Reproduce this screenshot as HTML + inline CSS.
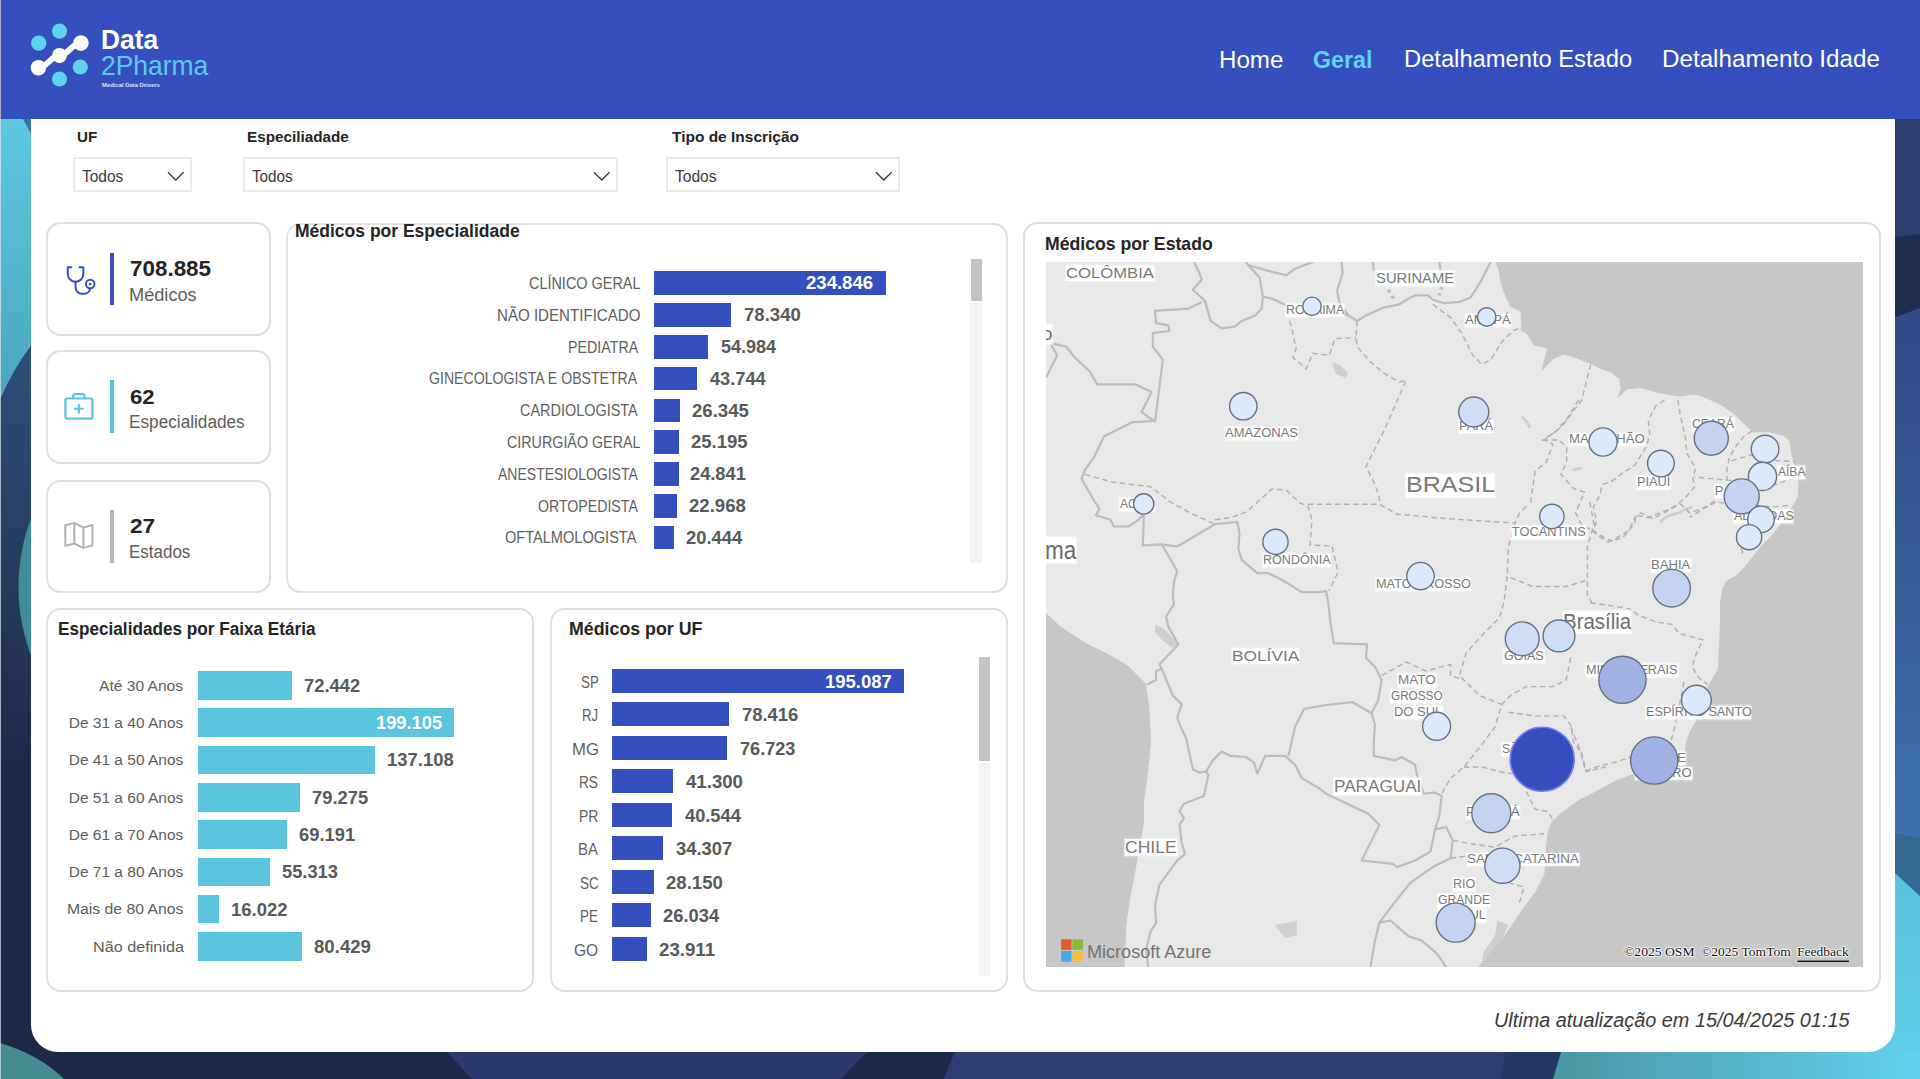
<!DOCTYPE html>
<html><head><meta charset="utf-8"><title>Data2Pharma</title>
<style>
html,body{margin:0;padding:0;width:1920px;height:1079px;overflow:hidden;background:#1e2848;font-family:"Liberation Sans",sans-serif;}
.a{position:absolute;}
.t{position:absolute;white-space:nowrap;line-height:1;transform-origin:0 0;}
.hbox{background:rgba(255,255,255,0.92);box-shadow:0 0 1.5px 1px rgba(255,255,255,0.75);}
.halo{text-shadow:0 0 1px #fff,0 0 2px #fff,1px 0 1px #fff,-1px 0 1px #fff,0 1px 1px #fff,0 -1px 1px #fff;}
</style></head><body>
<svg class="a" style="left:0;top:0" width="1920" height="1079" viewBox="0 0 1920 1079">
<defs>
<linearGradient id="gcy" x1="0" y1="0" x2="0" y2="1"><stop offset="0" stop-color="#5ec8df"/><stop offset="1" stop-color="#4aa6bc"/></linearGradient>
<linearGradient id="gdb" x1="0" y1="0" x2="0" y2="1"><stop offset="0" stop-color="#2c5079"/><stop offset="1" stop-color="#1f2a4c"/></linearGradient>
<linearGradient id="grb" x1="0" y1="0" x2="0" y2="1"><stop offset="0" stop-color="#2f4a85"/><stop offset="1" stop-color="#3d70ae"/></linearGradient>
<linearGradient id="gteal" x1="0" y1="0" x2="1" y2="0"><stop offset="0" stop-color="#4a96a4"/><stop offset="1" stop-color="#62d2ec"/></linearGradient>
<linearGradient id="grc" x1="0" y1="0" x2="0" y2="1"><stop offset="0" stop-color="#5ac2da"/><stop offset="1" stop-color="#60cfe9"/></linearGradient>
</defs>
<rect width="1920" height="1079" fill="#1e2848"/>
<rect x="1880" y="119" width="40" height="121" fill="#2d3d6e"/>
<polygon points="1880,239 1920,234 1920,308 1880,323" fill="#1f2d50"/>
<polygon points="1880,323 1920,308 1920,839 1880,831" fill="url(#grb)"/>
<polygon points="1880,831 1920,839 1920,896 1880,859" fill="#336a8f"/>
<polygon points="1880,859 1920,896 1920,1079 1860,1079" fill="url(#grc)"/>
<path d="M0,119 L31,119 L31,346 Q14,368 0,400 Z" fill="url(#gcy)"/>
<path d="M0,400 Q14,368 31,346 L31,760 L0,760 Z" fill="url(#gdb)"/>
<circle cx="212.5" cy="587" r="194" fill="#3f8d9a"/>
<path d="M0,1043 Q40,1055 64,1079 L0,1079 Z" fill="#488a94"/>
<polygon points="447,1052 867,1052 840.6,1079 472,1079" fill="#2c3b6d"/>
<polygon points="954.7,1052 1505.7,1052 1501.6,1079 943.75,1079" fill="#2d3d70"/>
<polygon points="1505.7,1052 1561,1052 1553,1079 1501.6,1079" fill="#223a62"/>
<polygon points="1561,1052 1920,1052 1920,1079 1553,1079" fill="url(#gteal)"/>
<polygon points="23,119 31,119 31,134" fill="#3d739b"/>
<rect x="0" y="0" width="1" height="1079" fill="#dfe6f3" opacity="0.7"/>
</svg>
<div class="a" style="left:31.00px;top:100.00px;width:1864.00px;height:952.00px;background:#fff;border-radius:0 0 27px 27px;"></div>
<div class="a" style="left:1.00px;top:0.00px;width:1919.00px;height:119.00px;background:#3550be;"></div>
<svg class="a" style="left:0;top:0" width="220" height="100" viewBox="0 0 220 100">
<path d="M38.4,67.7 C47,67.7 51,55.4 59.5,55.4 C68,55.4 72,43.1 80.9,43.1" stroke="#fff" stroke-width="6" fill="none" stroke-linecap="round"/>
<circle cx="59.5" cy="31.1" r="7.6" fill="#5fd3ee"/>
<circle cx="38.7" cy="43.1" r="7.7" fill="#5fd3ee"/>
<circle cx="80.3" cy="67" r="7.6" fill="#5fd3ee"/>
<circle cx="59.5" cy="79" r="7.6" fill="#5fd3ee"/>
<circle cx="80.9" cy="43.1" r="7.8" fill="#fff"/>
<circle cx="59.5" cy="55.4" r="7.5" fill="#fff"/>
<circle cx="38.4" cy="67.7" r="7.7" fill="#fff"/>
</svg>
<div class="a" style="left:72.70px;top:156.50px;width:119.80px;height:35.20px;box-sizing:border-box;border:2px solid #ebebeb;background:#fff;"></div>
<svg class="a" style="left:166.8px;top:171.0px" width="17.6" height="11"><path d="M1,1.2 L8.80,9.00 L16.60,1.2" stroke="#3b3a39" stroke-width="1.3" fill="none"/></svg>
<div class="a" style="left:242.60px;top:157.00px;width:375.90px;height:34.50px;box-sizing:border-box;border:2px solid #ebebeb;background:#fff;"></div>
<svg class="a" style="left:593.3px;top:171.0px" width="17.5" height="11"><path d="M1,1.2 L8.75,9.00 L16.50,1.2" stroke="#3b3a39" stroke-width="1.3" fill="none"/></svg>
<div class="a" style="left:666.25px;top:157.00px;width:233.55px;height:34.50px;box-sizing:border-box;border:2px solid #ebebeb;background:#fff;"></div>
<svg class="a" style="left:874.5px;top:171.0px" width="17.6" height="11"><path d="M1,1.2 L8.80,9.00 L16.60,1.2" stroke="#3b3a39" stroke-width="1.3" fill="none"/></svg>
<div class="a" style="left:45.65px;top:222.40px;width:225.45px;height:113.60px;box-sizing:border-box;border:2px solid #e0e0e0;border-radius:14.5px;background:#fff;"></div>
<div class="a" style="left:45.65px;top:350.40px;width:225.45px;height:113.20px;box-sizing:border-box;border:2px solid #e0e0e0;border-radius:14.5px;background:#fff;"></div>
<div class="a" style="left:45.65px;top:479.80px;width:225.45px;height:113.40px;box-sizing:border-box;border:2px solid #e0e0e0;border-radius:14.5px;background:#fff;"></div>
<div class="a" style="left:110.30px;top:252.50px;width:3.90px;height:52.30px;background:#3550be;"></div>
<div class="a" style="left:110.30px;top:380.40px;width:3.90px;height:52.50px;background:#5bc5dd;"></div>
<div class="a" style="left:110.30px;top:510.00px;width:3.90px;height:52.90px;background:#bab6b2;"></div>
<svg class="a" style="left:60px;top:258px" width="42" height="42" viewBox="60 258 42 42">
<path d="M71.4,267.2 H67.75 V274 A7.8,7.8 0 0 0 83.35,274 V267.2 H79.6" fill="none" stroke="#3550be" stroke-width="2" stroke-linecap="round" stroke-linejoin="round"/>
<path d="M75.55,281.8 V287.6 A6.2,6.2 0 0 0 81.75,293.8 H84 A6.2,6.2 0 0 0 90.2,288.4" fill="none" stroke="#3550be" stroke-width="2"/>
<circle cx="90.2" cy="284.1" r="4.3" fill="none" stroke="#3550be" stroke-width="2"/>
<circle cx="90.2" cy="284.1" r="1.3" fill="#3550be"/>
</svg>
<svg class="a" style="left:60px;top:388px" width="40" height="40" viewBox="60 388 40 40">
<rect x="65.4" y="398.5" width="27" height="20.2" rx="2" fill="none" stroke="#5bc5dd" stroke-width="2.2"/>
<path d="M73.2,398.5 V396 A2,2 0 0 1 75.2,394 H82.6 A2,2 0 0 1 84.6,396 V398.5" fill="none" stroke="#5bc5dd" stroke-width="2.2"/>
<path d="M78.9,404.7 V412.7 M74.9,408.7 H82.9" stroke="#5bc5dd" stroke-width="2" stroke-linecap="round"/>
</svg>
<svg class="a" style="left:60px;top:516px" width="40" height="38" viewBox="60 516 40 38">
<path d="M65.3,525.3 L74.3,522.9 L83.4,527.6 L92.4,525 L92.4,545.6 L83.4,547.9 L74.3,543.6 L65.3,545.8 Z" fill="none" stroke="#b3b0ad" stroke-width="2" stroke-linejoin="round"/>
<path d="M74.3,522.9 V543.6 M83.4,527.6 V547.9" stroke="#b3b0ad" stroke-width="2"/>
</svg>
<div class="a" style="left:286.40px;top:222.90px;width:721.90px;height:369.70px;box-sizing:border-box;border:2px solid #e0e0e0;border-radius:14.5px;background:#fff;"></div>
<div class="a" style="left:46.10px;top:607.60px;width:488.20px;height:384.00px;box-sizing:border-box;border:2px solid #e0e0e0;border-radius:14.5px;background:#fff;"></div>
<div class="a" style="left:549.80px;top:607.60px;width:457.80px;height:384.00px;box-sizing:border-box;border:2px solid #e0e0e0;border-radius:14.5px;background:#fff;"></div>
<div class="a" style="left:1023.00px;top:222.40px;width:857.60px;height:769.20px;box-sizing:border-box;border:2px solid #e0e0e0;border-radius:14.5px;background:#fff;"></div>
<div class="a" style="left:654.00px;top:271.25px;width:231.75px;height:23.70px;background:#3550be;"></div>
<div class="a" style="left:654.00px;top:303.07px;width:77.31px;height:23.70px;background:#3550be;"></div>
<div class="a" style="left:654.00px;top:334.89px;width:54.26px;height:23.70px;background:#3550be;"></div>
<div class="a" style="left:654.00px;top:366.71px;width:43.17px;height:23.70px;background:#3550be;"></div>
<div class="a" style="left:654.00px;top:398.53px;width:26.00px;height:23.70px;background:#3550be;"></div>
<div class="a" style="left:654.00px;top:430.35px;width:24.86px;height:23.70px;background:#3550be;"></div>
<div class="a" style="left:654.00px;top:462.17px;width:24.51px;height:23.70px;background:#3550be;"></div>
<div class="a" style="left:654.00px;top:493.99px;width:22.66px;height:23.70px;background:#3550be;"></div>
<div class="a" style="left:654.00px;top:525.81px;width:20.17px;height:23.70px;background:#3550be;"></div>
<div class="a" style="left:970.20px;top:302.60px;width:12.00px;height:260.00px;background:#f4f4f4;"></div>
<div class="a" style="left:970.70px;top:258.50px;width:11.50px;height:42.10px;background:#c4c4c4;"></div>
<div class="a" style="left:198.40px;top:671.10px;width:93.15px;height:28.60px;background:#5bc5dd;"></div>
<div class="a" style="left:198.40px;top:708.39px;width:256.01px;height:28.60px;background:#5bc5dd;"></div>
<div class="a" style="left:198.40px;top:745.68px;width:176.29px;height:28.60px;background:#5bc5dd;"></div>
<div class="a" style="left:198.40px;top:782.97px;width:101.93px;height:28.60px;background:#5bc5dd;"></div>
<div class="a" style="left:198.40px;top:820.26px;width:88.97px;height:28.60px;background:#5bc5dd;"></div>
<div class="a" style="left:198.40px;top:857.55px;width:71.12px;height:28.60px;background:#5bc5dd;"></div>
<div class="a" style="left:198.40px;top:894.84px;width:20.60px;height:28.60px;background:#5bc5dd;"></div>
<div class="a" style="left:198.40px;top:932.13px;width:103.42px;height:28.60px;background:#5bc5dd;"></div>
<div class="a" style="left:611.50px;top:669.00px;width:292.49px;height:23.60px;background:#3550be;"></div>
<div class="a" style="left:611.50px;top:702.49px;width:117.57px;height:23.60px;background:#3550be;"></div>
<div class="a" style="left:611.50px;top:735.98px;width:115.03px;height:23.60px;background:#3550be;"></div>
<div class="a" style="left:611.50px;top:769.47px;width:61.92px;height:23.60px;background:#3550be;"></div>
<div class="a" style="left:611.50px;top:802.96px;width:60.79px;height:23.60px;background:#3550be;"></div>
<div class="a" style="left:611.50px;top:836.45px;width:51.44px;height:23.60px;background:#3550be;"></div>
<div class="a" style="left:611.50px;top:869.94px;width:42.21px;height:23.60px;background:#3550be;"></div>
<div class="a" style="left:611.50px;top:903.43px;width:39.03px;height:23.60px;background:#3550be;"></div>
<div class="a" style="left:611.50px;top:936.92px;width:35.85px;height:23.60px;background:#3550be;"></div>
<div class="a" style="left:978.50px;top:763.00px;width:11.50px;height:213.20px;background:#f4f4f4;"></div>
<div class="a" style="left:978.50px;top:656.70px;width:11.50px;height:104.30px;background:#c4c4c4;"></div>
<svg class="a" style="left:0;top:0" width="1920" height="1079" viewBox="0 0 1920 1079">
<defs><clipPath id="mclip"><rect x="1046" y="262" width="817" height="705"/></clipPath></defs>
<g clip-path="url(#mclip)">
<rect x="1046" y="262" width="817" height="705" fill="#c7c7c7"/>
<polygon points="1041,257 1495.3,262.0 1499.1,271.8 1499.9,279.5 1502.9,290.2 1506.8,299.3 1510.6,307.0 1520.5,311.6 1521.3,323.8 1520.5,330.0 1527.4,334.5 1533.5,345.2 1547.3,348.3 1541.2,371.2 1553.4,359.0 1564.1,354.4 1571.7,356.7 1590.1,363.6 1602.3,369.7 1611.5,372.7 1619.1,378.9 1620.7,388.0 1617.6,398.0 1626.8,389.6 1640.6,388.0 1660.4,393.4 1680.0,396.7 1693.4,394.5 1702.3,396.7 1720.0,404.5 1733.4,413.4 1744.5,424.5 1753.4,432.3 1769.0,432.3 1782.4,435.6 1789.0,440.0 1791.3,453.4 1794.6,466.8 1798.0,480.2 1798.0,495.7 1793.5,504.6 1784.6,518.0 1773.5,533.6 1762.3,544.7 1753.4,555.8 1744.5,567.0 1735.6,575.9 1726.7,580.3 1722.3,589.2 1720.0,602.6 1720.0,620.0 1719.5,634.8 1717.7,669.5 1707.3,687.0 1703.1,706.6 1696.4,720.0 1690.0,731.0 1686.5,740.0 1684.5,754.0 1670.0,768.0 1650.0,773.0 1631.2,774.8 1615.7,780.4 1595.6,791.5 1577.8,800.4 1560.0,813.7 1551.2,822.6 1547.8,831.5 1545.6,851.6 1544.5,873.8 1535.6,891.6 1522.2,909.4 1513.3,922.7 1505.0,935.0 1492.0,950.0 1478.0,967.0 1124.6,967.0 1126.3,924.8 1129.9,900.1 1135.2,871.9 1140.4,843.7 1144.0,822.6 1144.0,801.5 1147.5,776.8 1151.0,741.5 1149.3,706.3 1145.7,683.4 1128.1,665.8 1110.5,655.2 1085.8,642.9 1061.1,627.0 1046.0,612.9 1041,257" fill="#e8e8e8"/>
<polyline points="1660.0,522.0 1668.0,516.0 1678.0,513.0 1686.0,509.0 1692.0,507.0" fill="none" stroke="#cdcdcd" stroke-width="2.5"/>
<polyline points="1522.0,417.0 1527.0,422.0 1530.0,428.0" fill="none" stroke="#cdcdcd" stroke-width="2.5"/>
<polyline points="1573.0,470.0 1582.0,468.0" fill="none" stroke="#cdcdcd" stroke-width="2.5"/>
<polygon points="1155.0,625.0 1163.0,628.0 1170.0,635.0 1178.0,644.0 1172.0,648.0 1162.0,640.0 1155.0,632.0" fill="#cfcfcf"/>
<polygon points="1497.3,920.5 1508.4,925.0 1501.7,940.5 1490.6,951.6 1481.7,962.8 1483.9,951.6 1495.0,936.1" fill="#cfcfcf"/>
<polygon points="1332.0,362.0 1340.0,365.0 1348.0,373.0 1346.0,378.0 1336.0,374.0" fill="#cfcfcf"/>
<polygon points="1275.0,925.0 1297.0,921.0 1297.0,935.0 1285.0,938.0" fill="#cfcfcf"/>
<polyline points="1084.9,474.4 1112.7,482.2 1150.5,486.6 1170.6,502.0 1190.6,513.1 1215.0,524.2" fill="none" stroke="#b0b0b0" stroke-width="1.4" stroke-dasharray="5.5 3.5"/>
<polyline points="1215.0,519.8 1230.6,517.6 1246.2,512.0 1260.0,500.0 1272.0,489.0 1286.0,490.0 1300.0,503.0 1308.0,506.0 1312.0,520.0 1310.0,545.0 1332.0,546.0 1338.0,572.0 1329.0,591.0" fill="none" stroke="#b0b0b0" stroke-width="1.4" stroke-dasharray="5.5 3.5"/>
<polyline points="1308.0,504.2 1366.0,504.2 1379.4,504.2 1397.2,514.2 1448.3,518.7 1515.0,523.1 1519.5,513.1 1528.4,504.2" fill="none" stroke="#b0b0b0" stroke-width="1.4" stroke-dasharray="5.5 3.5"/>
<polyline points="1289.5,320.9 1291.8,328.7 1296.2,348.7 1292.9,357.6 1306.2,368.8 1312.9,353.2 1329.3,355.4 1334.9,338.7 1356.0,337.6" fill="none" stroke="#b0b0b0" stroke-width="1.4" stroke-dasharray="5.5 3.5"/>
<polyline points="1357.1,320.9 1356.0,337.6 1357.1,346.5 1370.5,362.1 1383.8,373.2 1399.4,382.1 1406.1,379.9 1399.4,395.5 1383.8,431.0 1366.0,466.6 1374.9,484.4 1379.4,497.8 1379.4,504.2" fill="none" stroke="#b0b0b0" stroke-width="1.4" stroke-dasharray="5.5 3.5"/>
<polyline points="1432.8,304.3 1450.6,317.6 1461.7,333.2 1472.8,355.4 1481.7,364.3 1490.6,359.9 1501.7,342.1 1512.8,331.0 1520.6,327.6" fill="none" stroke="#b0b0b0" stroke-width="1.4" stroke-dasharray="5.5 3.5"/>
<polyline points="1590.7,364.3 1581.8,399.9 1561.8,426.6 1544.0,439.9 1552.9,444.4 1546.2,462.2 1535.1,471.1 1530.6,502.0 1528.4,504.2" fill="none" stroke="#b0b0b0" stroke-width="1.4" stroke-dasharray="5.5 3.5"/>
<polyline points="1515.0,523.1 1508.4,546.5 1507.3,575.4 1503.9,602.1 1499.5,617.7 1481.7,635.5 1466.1,653.2 1459.5,675.5 1463.9,679.9 1479.5,695.5 1501.7,704.4 1495.0,727.0 1481.7,744.8 1463.9,767.0 1450.6,778.2 1441.7,793.7" fill="none" stroke="#b0b0b0" stroke-width="1.4" stroke-dasharray="5.5 3.5"/>
<polyline points="1578.6,400.0 1566.7,419.3 1556.3,431.1 1543.0,440.0 1559.3,440.0 1566.7,447.5 1566.7,462.3 1560.8,474.2 1574.1,489.0 1584.5,492.0 1575.6,512.7 1581.5,524.6 1592.0,530.0" fill="none" stroke="#b0b0b0" stroke-width="1.4" stroke-dasharray="5.5 3.5"/>
<polyline points="1589.7,502.0 1594.1,524.2 1587.4,546.5 1587.4,568.7 1587.4,595.4 1594.1,606.5" fill="none" stroke="#b0b0b0" stroke-width="1.4" stroke-dasharray="5.5 3.5"/>
<polyline points="1510.6,577.6 1532.8,586.5 1548.4,586.5 1566.2,586.5 1588.5,579.8" fill="none" stroke="#b0b0b0" stroke-width="1.4" stroke-dasharray="5.5 3.5"/>
<polyline points="1381.6,675.5 1406.1,662.1 1426.1,671.0 1450.6,664.4 1450.6,675.5 1463.9,679.9" fill="none" stroke="#b0b0b0" stroke-width="1.4" stroke-dasharray="5.5 3.5"/>
<polyline points="1570.7,657.7 1566.2,679.9 1552.9,686.6 1526.2,686.6 1510.6,695.5 1501.7,704.4" fill="none" stroke="#b0b0b0" stroke-width="1.4" stroke-dasharray="5.5 3.5"/>
<polyline points="1508.4,712.2 1534.9,715.9 1563.9,715.9 1571.1,725.5 1573.5,742.4 1580.7,752.0 1585.5,771.3 1597.6,766.5 1616.9,761.7 1631.3,756.9 1650.0,752.0" fill="none" stroke="#b0b0b0" stroke-width="1.4" stroke-dasharray="5.5 3.5"/>
<polyline points="1590.4,602.7 1616.4,606.5 1629.7,608.8 1638.6,615.4 1656.4,622.1 1672.0,624.3 1678.6,633.2 1703.1,639.9 1696.4,653.2 1692.0,666.6 1698.7,677.7 1707.6,684.4" fill="none" stroke="#b0b0b0" stroke-width="1.4" stroke-dasharray="5.5 3.5"/>
<polyline points="1684.0,682.0 1676.4,720.0 1670.0,745.0 1660.0,757.0" fill="none" stroke="#b0b0b0" stroke-width="1.4" stroke-dasharray="5.5 3.5"/>
<polyline points="1591.9,530.9 1607.5,542.0 1623.0,537.6 1634.2,524.2 1636.4,515.3 1647.5,517.6 1665.3,510.9 1680.9,504.2 1689.8,513.1 1707.6,506.4 1716.4,502.0 1728.3,503.8" fill="none" stroke="#b0b0b0" stroke-width="1.4" stroke-dasharray="5.5 3.5"/>
<polyline points="1664.6,400.0 1655.7,405.9 1648.3,420.8 1649.7,434.1 1646.8,446.0 1634.9,465.3 1623.0,472.7 1611.2,481.6 1602.3,484.5 1599.3,496.4 1593.4,506.8 1596.4,521.6 1593.4,530.5" fill="none" stroke="#b0b0b0" stroke-width="1.4" stroke-dasharray="5.5 3.5"/>
<polyline points="1677.9,400.0 1680.2,414.8 1685.3,437.1 1686.8,453.4 1695.7,468.2 1692.8,477.1 1694.2,487.5 1685.3,497.9 1677.9,503.8 1664.6,512.7 1652.7,518.6 1640.8,512.7 1634.9,517.2 1629.0,530.5 1611.2,540.9 1602.3,536.4 1593.4,530.5" fill="none" stroke="#b0b0b0" stroke-width="1.4" stroke-dasharray="5.5 3.5"/>
<polyline points="1752.1,431.1 1744.7,435.6 1737.2,444.5 1729.8,456.4 1726.9,468.2 1726.9,480.1 1694.2,477.1" fill="none" stroke="#b0b0b0" stroke-width="1.4" stroke-dasharray="5.5 3.5"/>
<polyline points="1731.3,460.8 1750.6,454.9 1777.3,460.8 1795.1,461.5" fill="none" stroke="#b0b0b0" stroke-width="1.4" stroke-dasharray="5.5 3.5"/>
<polyline points="1726.9,480.1 1775.8,484.5 1792.1,478.6" fill="none" stroke="#b0b0b0" stroke-width="1.4" stroke-dasharray="5.5 3.5"/>
<polyline points="1715.0,500.8 1697.2,512.7 1689.8,517.2" fill="none" stroke="#b0b0b0" stroke-width="1.4" stroke-dasharray="5.5 3.5"/>
<polyline points="1728.3,503.8 1774.3,506.8 1790.6,505.3" fill="none" stroke="#b0b0b0" stroke-width="1.4" stroke-dasharray="5.5 3.5"/>
<polyline points="1738.7,539.8 1743.1,555.4" fill="none" stroke="#b0b0b0" stroke-width="1.4" stroke-dasharray="5.5 3.5"/>
<polyline points="1463.9,767.0 1481.7,767.0 1503.9,772.6 1512.8,773.7" fill="none" stroke="#b0b0b0" stroke-width="1.4" stroke-dasharray="5.5 3.5"/>
<polyline points="1526.2,791.5 1535.1,809.3 1548.4,811.5 1552.9,820.4" fill="none" stroke="#b0b0b0" stroke-width="1.4" stroke-dasharray="5.5 3.5"/>
<polyline points="1452.8,840.4 1470.6,843.8 1495.0,847.1 1515.1,836.0 1544.0,833.8" fill="none" stroke="#b0b0b0" stroke-width="1.4" stroke-dasharray="5.5 3.5"/>
<polyline points="1508.4,882.7 1524.0,887.1 1519.5,902.7" fill="none" stroke="#b0b0b0" stroke-width="1.4" stroke-dasharray="5.5 3.5"/>
<polyline points="1570.7,727.0 1581.8,753.7 1586.2,771.5 1606.0,767.0" fill="none" stroke="#b0b0b0" stroke-width="1.4" stroke-dasharray="5.5 3.5"/>
<polyline points="1450.6,858.2 1467.0,856.0" fill="none" stroke="#b0b0b0" stroke-width="1.4" stroke-dasharray="5.5 3.5"/>
<polyline points="1193.9,262.0 1199.5,273.1 1201.7,279.8 1192.8,289.8 1205.0,300.9 1210.6,320.9 1221.7,328.3 1235.1,326.5 1241.7,320.9 1255.1,315.4 1261.7,308.7 1262.9,296.5 1259.5,277.6 1248.4,265.3 1246.2,262.0" fill="none" stroke="#bdbdbd" stroke-width="2.2" stroke-linejoin="round"/>
<polyline points="1262.9,296.5 1275.1,299.8 1286.2,305.4 1348.2,315.4 1357.1,320.9 1366.0,315.4 1383.8,307.6 1399.4,304.3 1408.3,298.7 1415.0,295.4 1428.3,295.4 1432.8,299.8 1443.9,303.1 1459.5,302.0 1470.6,297.6 1481.7,279.8 1490.6,262.0" fill="none" stroke="#bdbdbd" stroke-width="2.2" stroke-linejoin="round"/>
<polyline points="1248.4,265.3 1268.4,270.9 1286.2,275.3 1295.1,268.7 1312.9,262.0" fill="none" stroke="#bdbdbd" stroke-width="2.2" stroke-linejoin="round"/>
<polyline points="1341.6,262.0 1342.7,273.1 1337.1,290.9 1339.3,302.0 1348.2,315.4" fill="none" stroke="#bdbdbd" stroke-width="2.2" stroke-linejoin="round"/>
<polyline points="1372.7,262.0 1373.8,270.9" fill="none" stroke="#bdbdbd" stroke-width="2.2" stroke-linejoin="round"/>
<polyline points="1439.4,262.0 1440.5,270.9" fill="none" stroke="#bdbdbd" stroke-width="2.2" stroke-linejoin="round"/>
<polyline points="1201.7,302.0 1188.3,308.7 1155.0,310.9 1156.1,323.2 1168.3,325.4 1169.4,331.0 1152.8,333.2 1152.8,346.5 1162.8,359.9 1155.0,422.1" fill="none" stroke="#bdbdbd" stroke-width="2.2" stroke-linejoin="round"/>
<polyline points="1050.4,343.2 1066.0,346.5 1074.9,357.6 1089.4,371.0 1097.2,384.3 1119.4,384.3 1135.0,384.3 1151.6,392.1 1141.6,412.1 1153.9,421.0 1132.7,422.1 1103.8,436.6 1093.8,457.7 1084.9,470.0 1081.6,478.9 1094.9,502.0 1099.4,508.7 1096.0,515.3 1110.5,519.8 1113.8,526.5 1128.3,526.5 1137.2,520.9 1143.9,514.2 1142.8,545.4 1161.7,544.3 1177.2,546.5 1190.6,538.7 1201.7,532.0 1215.0,524.2 1237.3,522.0 1239.5,533.1 1238.4,548.7 1241.7,559.8 1257.3,573.2 1268.4,573.2 1281.8,579.8 1301.8,592.1 1319.6,592.1 1326.0,591.0 1328.2,602.1 1330.4,622.1 1333.8,643.2 1367.1,644.4 1366.0,657.7 1374.9,666.6 1381.6,679.9 1378.3,700.0 1371.6,713.3 1374.9,724.4 1373.8,742.0 1373.8,755.9 1395.0,760.4 1401.6,757.0 1415.0,764.8 1417.2,775.9 1423.9,793.7 1435.0,792.6 1441.7,796.0 1439.4,816.0 1435.0,829.3 1446.1,827.1 1452.8,840.4 1450.6,858.2 1432.8,867.1 1410.5,882.7 1392.7,904.9 1379.4,922.7 1390.5,920.5 1408.3,936.1 1421.6,940.5 1437.2,953.9 1446.1,967.0" fill="none" stroke="#bdbdbd" stroke-width="2.2" stroke-linejoin="round"/>
<polyline points="1050.4,343.2 1057.1,355.4 1046.0,377.7" fill="none" stroke="#bdbdbd" stroke-width="2.2" stroke-linejoin="round"/>
<polyline points="1379.4,922.7 1374.9,940.5 1370.5,967.0" fill="none" stroke="#bdbdbd" stroke-width="2.2" stroke-linejoin="round"/>
<polyline points="1161.7,544.3 1177.2,571.0 1173.9,582.1 1172.8,595.4 1173.9,604.3 1166.1,616.5 1168.3,626.6 1178.3,644.4 1159.4,664.4 1161.7,668.8 1156.1,671.0 1156.1,679.9 1147.2,684.4" fill="none" stroke="#bdbdbd" stroke-width="2.2" stroke-linejoin="round"/>
<polyline points="1161.7,668.8 1172.8,695.5 1181.7,704.4 1177.2,717.7 1180.6,726.6 1186.1,738.1 1192.8,769.3 1199.5,772.6 1206.1,771.5 1208.4,774.8 1203.9,796.0 1183.9,803.7 1179.5,811.5 1183.9,818.2 1179.5,824.9 1181.7,842.7 1185.0,853.8 1177.2,860.5 1170.6,869.3 1159.4,884.9 1155.0,904.9 1156.1,922.7 1150.5,931.6 1146.1,949.4 1148.3,967.0" fill="none" stroke="#bdbdbd" stroke-width="2.2" stroke-linejoin="round"/>
<polyline points="1206.1,771.5 1212.8,760.4 1221.7,751.5 1230.6,755.9 1246.2,757.0 1254.0,762.6 1257.3,773.7 1265.1,755.9 1285.1,755.9 1295.1,764.8 1301.8,778.2 1317.4,787.1 1326.0,793.7 1368.3,813.7 1379.4,824.9 1361.6,860.5 1392.7,863.8 1397.2,867.1 1415.0,860.5 1430.5,851.6 1435.0,829.3" fill="none" stroke="#bdbdbd" stroke-width="2.2" stroke-linejoin="round"/>
<polyline points="1371.6,713.3 1352.7,702.2 1326.0,705.0 1304.0,708.9 1295.1,726.6 1288.4,756.0" fill="none" stroke="#bdbdbd" stroke-width="2.2" stroke-linejoin="round"/>
<polyline points="1388.3,289.8 1395.0,300.9" fill="none" stroke="#bdbdbd" stroke-width="3.5" stroke-dasharray="3 4"/>
<polyline points="1441.7,286.5 1439.4,295.4" fill="none" stroke="#bdbdbd" stroke-width="3.5" stroke-dasharray="3 4"/>
</g>
<span class="t " style="left:101.15px;top:27.00px;font-size:26.96px;color:#ffffff;font-weight:bold;transform:scaleX(0.9787);">Data</span>
<span class="t " style="left:101.06px;top:52.00px;font-size:27.37px;color:#5dc9ee;transform:scaleX(0.9658);">2Pharma</span>
<span class="t " style="left:102.43px;top:83.00px;font-size:5.87px;color:#dfe4f5;font-weight:bold;transform:scaleX(1.0034);">Medical Data Drivers</span>
<span class="t " style="left:1218.51px;top:48.00px;font-size:24.02px;color:#ffffff;transform:scaleX(1.0044);">Home</span>
<span class="t " style="left:1313.47px;top:48.00px;font-size:24.30px;color:#5fd3f3;font-weight:bold;transform:scaleX(0.9558);">Geral</span>
<span class="t " style="left:1403.75px;top:47.00px;font-size:24.02px;color:#ffffff;transform:scaleX(0.9878);">Detalhamento Estado</span>
<span class="t " style="left:1661.61px;top:47.00px;font-size:24.02px;color:#ffffff;transform:scaleX(1.0075);">Detalhamento Idade</span>
<span class="t " style="left:76.99px;top:129.00px;font-size:15.36px;color:#252423;font-weight:bold;transform:scaleX(0.9867);">UF</span>
<span class="t " style="left:246.85px;top:129.00px;font-size:15.36px;color:#252423;font-weight:bold;transform:scaleX(0.9938);">Especiliadade</span>
<span class="t " style="left:671.50px;top:129.00px;font-size:15.36px;color:#252423;font-weight:bold;transform:scaleX(1.0074);">Tipo de Inscrição</span>
<span class="t " style="left:81.66px;top:169.00px;font-size:15.92px;color:#3b3a39;transform:scaleX(0.9727);">Todos</span>
<span class="t " style="left:251.76px;top:169.00px;font-size:15.92px;color:#3b3a39;transform:scaleX(0.9583);">Todos</span>
<span class="t " style="left:675.16px;top:169.00px;font-size:15.92px;color:#3b3a39;transform:scaleX(0.9787);">Todos</span>
<span class="t " style="left:129.80px;top:259.00px;font-size:21.37px;color:#252423;font-weight:bold;transform:scaleX(1.0494);">708.885</span>
<span class="t " style="left:129.08px;top:287.00px;font-size:17.81px;color:#605e5c;transform:scaleX(1.0216);">Médicos</span>
<span class="t " style="left:129.81px;top:386.00px;font-size:21.09px;color:#252423;font-weight:bold;transform:scaleX(1.0506);">62</span>
<span class="t " style="left:129.16px;top:414.00px;font-size:17.81px;color:#605e5c;transform:scaleX(0.9666);">Especialidades</span>
<span class="t " style="left:129.79px;top:515.00px;font-size:21.09px;color:#252423;font-weight:bold;transform:scaleX(1.0755);">27</span>
<span class="t " style="left:129.17px;top:544.00px;font-size:17.81px;color:#605e5c;transform:scaleX(0.9536);">Estados</span>
<span class="t " style="left:295.11px;top:223.00px;font-size:17.60px;color:#252423;font-weight:bold;transform:scaleX(0.9948);">Médicos por Especialidade</span>
<span class="t " style="left:57.73px;top:621.00px;font-size:17.60px;color:#252423;font-weight:bold;transform:scaleX(0.9753);">Especialidades por Faixa Etária</span>
<span class="t " style="left:568.89px;top:621.00px;font-size:17.60px;color:#252423;font-weight:bold;transform:scaleX(1.0106);">Médicos por UF</span>
<span class="t " style="left:1045.00px;top:236.00px;font-size:17.88px;color:#252423;font-weight:bold;transform:scaleX(0.9884);">Médicos por Estado</span>
<span class="t " style="left:528.82px;top:275.00px;font-size:16.34px;color:#605e5c;transform:scaleX(0.8837);">CLÍNICO GERAL</span>
<span class="t " style="left:806.42px;top:274.00px;font-size:18.02px;color:#ffffff;font-weight:bold;transform:scaleX(1.0294);">234.846</span>
<span class="t " style="left:497.07px;top:307.00px;font-size:16.34px;color:#605e5c;transform:scaleX(0.9249);">NÃO IDENTIFICADO</span>
<span class="t " style="left:743.92px;top:306.00px;font-size:18.02px;color:#595959;font-weight:bold;transform:scaleX(1.0314);">78.340</span>
<span class="t " style="left:568.39px;top:339.00px;font-size:16.34px;color:#605e5c;transform:scaleX(0.8732);">PEDIATRA</span>
<span class="t " style="left:720.97px;top:338.00px;font-size:18.02px;color:#595959;font-weight:bold;">54.984</span>
<span class="t " style="left:428.84px;top:370.00px;font-size:16.34px;color:#605e5c;transform:scaleX(0.8636);">GINECOLOGISTA E OBSTETRA</span>
<span class="t " style="left:710.00px;top:370.00px;font-size:18.02px;color:#595959;font-weight:bold;transform:scaleX(1.0096);">43.744</span>
<span class="t " style="left:520.12px;top:402.00px;font-size:16.34px;color:#605e5c;transform:scaleX(0.8847);">CARDIOLOGISTA</span>
<span class="t " style="left:691.92px;top:402.00px;font-size:18.02px;color:#595959;font-weight:bold;transform:scaleX(1.0315);">26.345</span>
<span class="t " style="left:506.83px;top:434.00px;font-size:16.34px;color:#605e5c;transform:scaleX(0.8754);">CIRURGIÃO GERAL</span>
<span class="t " style="left:690.62px;top:433.00px;font-size:18.02px;color:#595959;font-weight:bold;transform:scaleX(1.0260);">25.195</span>
<span class="t " style="left:498.00px;top:466.00px;font-size:16.34px;color:#605e5c;transform:scaleX(0.8577);">ANESTESIOLOGISTA</span>
<span class="t " style="left:690.43px;top:465.00px;font-size:18.02px;color:#595959;font-weight:bold;transform:scaleX(1.0130);">24.841</span>
<span class="t " style="left:538.04px;top:498.00px;font-size:16.34px;color:#605e5c;transform:scaleX(0.8662);">ORTOPEDISTA</span>
<span class="t " style="left:688.62px;top:497.00px;font-size:18.02px;color:#595959;font-weight:bold;transform:scaleX(1.0315);">22.968</span>
<span class="t " style="left:505.12px;top:529.00px;font-size:16.34px;color:#605e5c;transform:scaleX(0.8923);">OFTALMOLOGISTA</span>
<span class="t " style="left:686.13px;top:529.00px;font-size:18.02px;color:#595959;font-weight:bold;transform:scaleX(1.0209);">20.444</span>
<span class="t " style="left:99.40px;top:678.00px;font-size:15.50px;color:#605e5c;transform:scaleX(1.0056);">Até 30 Anos</span>
<span class="t " style="left:303.93px;top:677.00px;font-size:18.02px;color:#595959;font-weight:bold;transform:scaleX(1.0186);">72.442</span>
<span class="t " style="left:68.69px;top:715.00px;font-size:15.50px;color:#605e5c;">De 31 a 40 Anos</span>
<span class="t " style="left:375.56px;top:714.00px;font-size:18.02px;color:#ffffff;font-weight:bold;transform:scaleX(1.0149);">199.105</span>
<span class="t " style="left:68.69px;top:752.00px;font-size:15.50px;color:#605e5c;">De 41 a 50 Anos</span>
<span class="t " style="left:386.65px;top:751.00px;font-size:18.02px;color:#595959;font-weight:bold;transform:scaleX(1.0244);">137.108</span>
<span class="t " style="left:68.69px;top:790.00px;font-size:15.50px;color:#605e5c;">De 51 a 60 Anos</span>
<span class="t " style="left:312.43px;top:789.00px;font-size:18.02px;color:#595959;font-weight:bold;transform:scaleX(1.0186);">79.275</span>
<span class="t " style="left:68.69px;top:827.00px;font-size:15.50px;color:#605e5c;">De 61 a 70 Anos</span>
<span class="t " style="left:299.03px;top:826.00px;font-size:18.02px;color:#595959;font-weight:bold;transform:scaleX(1.0186);">69.191</span>
<span class="t " style="left:68.69px;top:864.00px;font-size:15.50px;color:#605e5c;">De 71 a 80 Anos</span>
<span class="t " style="left:281.71px;top:863.00px;font-size:18.02px;color:#595959;font-weight:bold;transform:scaleX(1.0152);">55.313</span>
<span class="t " style="left:67.17px;top:901.00px;font-size:15.50px;color:#605e5c;transform:scaleX(1.0147);">Mais de 80 Anos</span>
<span class="t " style="left:230.75px;top:901.00px;font-size:18.02px;color:#595959;font-weight:bold;transform:scaleX(1.0256);">16.022</span>
<span class="t " style="left:92.73px;top:939.00px;font-size:15.50px;color:#605e5c;transform:scaleX(1.0455);">Não definida</span>
<span class="t " style="left:313.52px;top:938.00px;font-size:18.02px;color:#595959;font-weight:bold;transform:scaleX(1.0334);">80.429</span>
<span class="t " style="left:580.58px;top:675.00px;font-size:15.78px;color:#605e5c;transform:scaleX(0.8443);">SP</span>
<span class="t " style="left:825.44px;top:674.00px;font-size:17.60px;color:#ffffff;font-weight:bold;transform:scaleX(1.0518);">195.087</span>
<span class="t " style="left:582.47px;top:708.00px;font-size:15.78px;color:#605e5c;transform:scaleX(0.8378);">RJ</span>
<span class="t " style="left:741.62px;top:707.00px;font-size:17.60px;color:#595959;font-weight:bold;transform:scaleX(1.0466);">78.416</span>
<span class="t " style="left:572.09px;top:742.00px;font-size:15.78px;color:#605e5c;transform:scaleX(1.0604);">MG</span>
<span class="t " style="left:739.73px;top:741.00px;font-size:17.60px;color:#595959;font-weight:bold;transform:scaleX(1.0296);">76.723</span>
<span class="t " style="left:579.43px;top:775.00px;font-size:15.78px;color:#605e5c;transform:scaleX(0.8638);">RS</span>
<span class="t " style="left:686.00px;top:774.00px;font-size:17.60px;color:#595959;font-weight:bold;transform:scaleX(1.0582);">41.300</span>
<span class="t " style="left:578.91px;top:809.00px;font-size:15.78px;color:#605e5c;transform:scaleX(0.8836);">PR</span>
<span class="t " style="left:685.00px;top:808.00px;font-size:17.60px;color:#595959;font-weight:bold;transform:scaleX(1.0364);">40.544</span>
<span class="t " style="left:577.84px;top:842.00px;font-size:15.78px;color:#605e5c;transform:scaleX(0.9449);">BA</span>
<span class="t " style="left:675.71px;top:841.00px;font-size:17.60px;color:#595959;font-weight:bold;transform:scaleX(1.0428);">34.307</span>
<span class="t " style="left:579.58px;top:876.00px;font-size:15.78px;color:#605e5c;transform:scaleX(0.8523);">SC</span>
<span class="t " style="left:666.02px;top:875.00px;font-size:17.60px;color:#595959;font-weight:bold;transform:scaleX(1.0559);">28.150</span>
<span class="t " style="left:580.45px;top:909.00px;font-size:15.78px;color:#605e5c;transform:scaleX(0.8508);">PE</span>
<span class="t " style="left:662.83px;top:908.00px;font-size:17.60px;color:#595959;font-weight:bold;transform:scaleX(1.0433);">26.034</span>
<span class="t " style="left:574.27px;top:943.00px;font-size:15.78px;color:#605e5c;transform:scaleX(0.9859);">GO</span>
<span class="t " style="left:659.42px;top:942.00px;font-size:17.60px;color:#595959;font-weight:bold;transform:scaleX(1.0604);">23.911</span>
<span class="t " style="left:1494.26px;top:1011.00px;font-size:19.69px;color:#3b3a39;font-style:italic;transform:scaleX(1.0088);">Ultima atualização em 15/04/2025 01:15</span>
<div class="a" style="left:1046px;top:262px;width:817px;height:705px;overflow:hidden"><span class="t hbox" style="left:20.32px;top:3.00px;font-size:15.50px;color:#7a7a7a;transform:scaleX(1.0741);">COLÔMBIA</span>
<span class="t hbox" style="left:329.54px;top:9.00px;font-size:14.53px;color:#7a7a7a;transform:scaleX(1.0211);">SURINAME</span>
<span class="t hbox" style="left:239.72px;top:42.00px;font-size:12.85px;color:#7a7a7a;transform:scaleX(0.9741);">RORAIMA</span>
<span class="t hbox" style="left:419.00px;top:52.00px;font-size:12.85px;color:#7a7a7a;transform:scaleX(1.0167);">AMAPÁ</span>
<span class="t hbox" style="left:179.00px;top:165.00px;font-size:12.85px;color:#7a7a7a;transform:scaleX(1.0130);">AMAZONAS</span>
<span class="t hbox" style="left:412.99px;top:158.00px;font-size:12.85px;color:#7a7a7a;transform:scaleX(1.0062);">PARÁ</span>
<span class="t hbox" style="left:360.34px;top:212.00px;font-size:22.63px;color:#7a7a7a;transform:scaleX(1.1094);">BRASIL</span>
<span class="t hbox" style="left:523.38px;top:171.00px;font-size:12.85px;color:#7a7a7a;transform:scaleX(1.0209);">MARANHÃO</span>
<span class="t hbox" style="left:590.90px;top:214.00px;font-size:12.85px;color:#7a7a7a;">PIAUÍ</span>
<span class="t hbox" style="left:646.23px;top:156.00px;font-size:12.85px;color:#7a7a7a;transform:scaleX(0.9490);">CEARÁ</span>
<span class="t hbox" style="left:732.00px;top:204.00px;font-size:12.85px;color:#7a7a7a;transform:scaleX(0.9372);">AÍBA</span>
<span class="t hbox" style="left:668.70px;top:223.00px;font-size:12.85px;color:#7a7a7a;">P</span>
<span class="t hbox" style="left:687.50px;top:248.00px;font-size:12.85px;color:#7a7a7a;transform:scaleX(0.9757);">ALAGOAS</span>
<span class="t hbox" style="left:465.80px;top:264.00px;font-size:12.85px;color:#7a7a7a;">TOCANTINS</span>
<span class="t hbox" style="left:73.80px;top:236.00px;font-size:12.85px;color:#7a7a7a;transform:scaleX(0.9443);">ACRE</span>
<span class="t hbox" style="left:216.82px;top:292.00px;font-size:12.85px;color:#7a7a7a;transform:scaleX(0.9780);">RONDÔNIA</span>
<span class="t hbox" style="left:330.01px;top:316.00px;font-size:12.85px;color:#7a7a7a;transform:scaleX(0.9900);">MATO GROSSO</span>
<span class="t hbox" style="left:605.48px;top:297.00px;font-size:12.85px;color:#7a7a7a;transform:scaleX(1.0181);">BAHIA</span>
<span class="t hbox" style="left:517.40px;top:349.00px;font-size:21.93px;color:#6f6f6f;transform:scaleX(0.9337);">Brasília</span>
<span class="t hbox" style="left:458.21px;top:388.00px;font-size:12.85px;color:#7a7a7a;transform:scaleX(0.9758);">GOIÁS</span>
<span class="t hbox" style="left:539.71px;top:402.00px;font-size:12.85px;color:#7a7a7a;transform:scaleX(0.9849);">MINAS GERAIS</span>
<span class="t hbox" style="left:600.01px;top:444.00px;font-size:12.85px;color:#7a7a7a;transform:scaleX(0.9860);">ESPÍRITO SANTO</span>
<span class="t hbox" style="left:351.95px;top:412.00px;font-size:12.85px;color:#7a7a7a;transform:scaleX(1.0475);">MATO</span>
<span class="t hbox" style="left:345.05px;top:428.00px;font-size:12.85px;color:#7a7a7a;transform:scaleX(0.9141);">GROSSO</span>
<span class="t hbox" style="left:347.99px;top:444.00px;font-size:12.85px;color:#7a7a7a;transform:scaleX(1.0104);">DO SUL</span>
<span class="t hbox" style="left:186.25px;top:386.00px;font-size:15.50px;color:#7a7a7a;transform:scaleX(1.1152);">BOLÍVIA</span>
<span class="t hbox" style="left:456.02px;top:481.00px;font-size:12.85px;color:#7a7a7a;transform:scaleX(0.9343);">SÃO PAULO</span>
<span class="t hbox" style="left:592.93px;top:490.00px;font-size:12.85px;color:#7a7a7a;transform:scaleX(1.0651);">RIO DE</span>
<span class="t hbox" style="left:588.80px;top:505.00px;font-size:12.85px;color:#7a7a7a;transform:scaleX(1.0195);">JANEIRO</span>
<span class="t hbox" style="left:287.56px;top:516.00px;font-size:17.04px;color:#7a7a7a;transform:scaleX(1.0069);">PARAGUAI</span>
<span class="t hbox" style="left:419.86px;top:544.00px;font-size:12.85px;color:#7a7a7a;transform:scaleX(1.0364);">PARANÁ</span>
<span class="t hbox" style="left:421.38px;top:591.00px;font-size:12.85px;color:#7a7a7a;transform:scaleX(1.0372);">SANTA CATARINA</span>
<span class="t hbox" style="left:406.52px;top:616.00px;font-size:12.85px;color:#7a7a7a;transform:scaleX(0.9774);">RIO</span>
<span class="t hbox" style="left:391.53px;top:632.00px;font-size:12.85px;color:#7a7a7a;transform:scaleX(0.9474);">GRANDE</span>
<span class="t hbox" style="left:393.02px;top:647.00px;font-size:12.85px;color:#7a7a7a;transform:scaleX(0.9760);">DO SUL</span>
<span class="t hbox" style="left:78.78px;top:577.00px;font-size:17.18px;color:#7a7a7a;transform:scaleX(1.0210);">CHILE</span>
<span class="t hbox" style="left:-1.41px;top:275.00px;font-size:26.40px;color:#6a6a6a;transform:scaleX(0.8526);">ma</span>
<span class="t hbox" style="left:-4.12px;top:63.00px;font-size:18.85px;color:#6a6a6a;">o</span>
<span class="t " style="left:41.29px;top:682.00px;font-size:17.46px;color:#737373;transform:scaleX(1.0353);">Microsoft Azure</span>
<span class="t halo" style="left:578.17px;top:684.00px;font-size:12.84px;color:#111111;font-family:'Liberation Serif';transform:scaleX(1.0623);">©2025 OSM</span>
<span class="t halo" style="left:654.58px;top:684.00px;font-size:12.84px;color:#111111;font-family:'Liberation Serif';transform:scaleX(1.0555);">©2025 TomTom</span>
<span class="t halo" style="left:751.29px;top:684.00px;font-size:12.84px;color:#111111;font-family:'Liberation Serif';transform:scaleX(1.0511);">Feedback</span></div>
<svg class="a" style="left:0;top:0" width="1920" height="1079" viewBox="0 0 1920 1079">
<circle cx="1312" cy="306.3" r="9.2" fill="#dce9fb" stroke="#677186" stroke-width="1.4"/>
<circle cx="1486.7" cy="317" r="9.2" fill="#dce9fb" stroke="#677186" stroke-width="1.4"/>
<circle cx="1243.3" cy="406.2" r="13.7" fill="#dce9fb" stroke="#677186" stroke-width="1.4"/>
<circle cx="1473.8" cy="412" r="15" fill="#cfdef6" stroke="#677186" stroke-width="1.4"/>
<circle cx="1603" cy="442" r="14.1" fill="#dce9fb" stroke="#677186" stroke-width="1.4"/>
<circle cx="1660.9" cy="463.5" r="13.3" fill="#dce9fb" stroke="#677186" stroke-width="1.4"/>
<circle cx="1711.3" cy="438.3" r="17" fill="#c3d3f1" stroke="#677186" stroke-width="1.4"/>
<circle cx="1765.1" cy="449" r="13.8" fill="#dce9fb" stroke="#677186" stroke-width="1.4"/>
<circle cx="1762.5" cy="476.4" r="14.1" fill="#dce9fb" stroke="#677186" stroke-width="1.4"/>
<circle cx="1741.7" cy="496.4" r="17.5" fill="#c3d3f1" stroke="#677186" stroke-width="1.4"/>
<circle cx="1761" cy="519.4" r="13.3" fill="#dce9fb" stroke="#677186" stroke-width="1.4"/>
<circle cx="1749.1" cy="537.2" r="12.6" fill="#dce9fb" stroke="#677186" stroke-width="1.4"/>
<circle cx="1551.9" cy="516.4" r="12.2" fill="#dce9fb" stroke="#677186" stroke-width="1.4"/>
<circle cx="1143.7" cy="503.9" r="10.2" fill="#dce9fb" stroke="#677186" stroke-width="1.4"/>
<circle cx="1275.5" cy="541.9" r="12.6" fill="#dce9fb" stroke="#677186" stroke-width="1.4"/>
<circle cx="1420.5" cy="576.1" r="13.7" fill="#dce9fb" stroke="#677186" stroke-width="1.4"/>
<circle cx="1671.6" cy="588.2" r="18.8" fill="#c3d3f1" stroke="#677186" stroke-width="1.4"/>
<circle cx="1522.2" cy="638.8" r="16.9" fill="#cfdef6" stroke="#677186" stroke-width="1.4"/>
<circle cx="1559" cy="635.9" r="15.9" fill="#cfdef6" stroke="#677186" stroke-width="1.4"/>
<circle cx="1622.4" cy="679.8" r="23.6" fill="#9fb2e3" stroke="#677186" stroke-width="1.4"/>
<circle cx="1696.4" cy="700.2" r="14.9" fill="#dce9fb" stroke="#677186" stroke-width="1.4"/>
<circle cx="1436.6" cy="726.3" r="14" fill="#dce9fb" stroke="#677186" stroke-width="1.4"/>
<circle cx="1654.2" cy="760.5" r="23.6" fill="#9fb2e3" stroke="#677186" stroke-width="1.4"/>
<circle cx="1491.3" cy="813.2" r="19.5" fill="#c3d3f1" stroke="#677186" stroke-width="1.4"/>
<circle cx="1502.4" cy="865.7" r="17.6" fill="#cfdef6" stroke="#677186" stroke-width="1.4"/>
<circle cx="1455.7" cy="922.6" r="19.5" fill="#c3d3f1" stroke="#677186" stroke-width="1.4"/>
<circle cx="1542.2" cy="759.3" r="32" fill="#3550be" stroke="#7b7cf2" stroke-width="1.6"/>
<rect x="1061.1" y="939.3" width="10.4" height="10.6" fill="#e35b2f"/><rect x="1072.4" y="939.3" width="10.6" height="10.6" fill="#8cbb36"/><rect x="1061.1" y="951" width="10.4" height="10.6" fill="#4ba6ea"/><rect x="1072.4" y="951" width="10.6" height="10.6" fill="#f3bd41"/>
<rect x="1797.5" y="960.6" width="51.5" height="1.4" fill="#111"/>
</svg>

</body></html>
